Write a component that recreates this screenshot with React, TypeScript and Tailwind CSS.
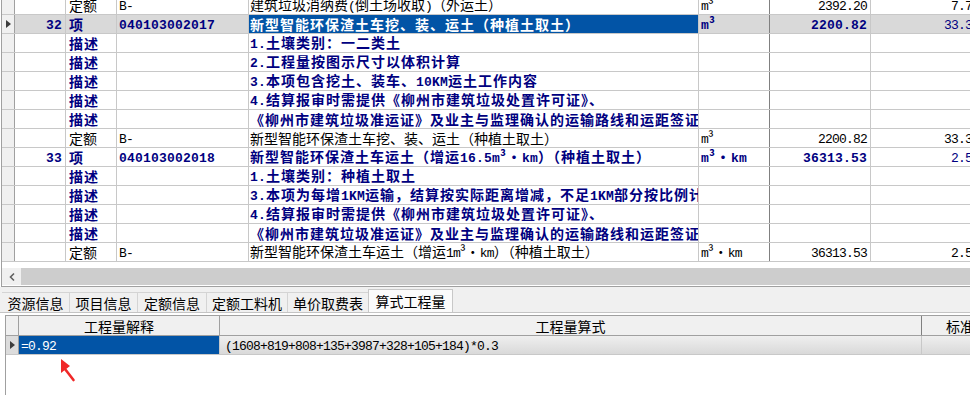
import React from "react";

type Row = {
  num?: string;
  type: string;
  code?: string;
  desc: string;
  unit?: string;
  qty?: string;
  last?: string;
  kind: "quota" | "item" | "desc";
  selected?: boolean;
};

const rows: Row[] = [
  { type: "定额", code: "B-", desc: "建筑垃圾消纳费(倒土场收取)（外运土）", unit: "m³", qty: "2392.20", last: "7.78", kind: "quota" },
  { num: "32", type: "项", code: "040103002017", desc: "新型智能环保渣土车挖、装、运土（种植土取土）", unit: "m³", qty: "2200.82", last: "33.36", kind: "item", selected: true },
  { type: "描述", desc: "1.土壤类别：一二类土", kind: "desc" },
  { type: "描述", desc: "2.工程量按图示尺寸以体积计算", kind: "desc" },
  { type: "描述", desc: "3.本项包含挖土、装车、10KM运土工作内容", kind: "desc" },
  { type: "描述", desc: "4.结算报审时需提供《柳州市建筑垃圾处置许可证》、", kind: "desc" },
  { type: "描述", desc: "《柳州市建筑垃圾准运证》及业主与监理确认的运输路线和运距签证", kind: "desc" },
  { type: "定额", code: "B-", desc: "新型智能环保渣土车挖、装、运土（种植土取土）", unit: "m³", qty: "2200.82", last: "33.36", kind: "quota" },
  { num: "33", type: "项", code: "040103002018", desc: "新型智能环保渣土车运土（增运16.5m³·km）（种植土取土）", unit: "m³·km", qty: "36313.53", last: "2.56", kind: "item" },
  { type: "描述", desc: "1.土壤类别：种植土取土", kind: "desc" },
  { type: "描述", desc: "3.本项为每增1KM运输，结算按实际距离增减，不足1KM部分按比例计算", kind: "desc" },
  { type: "描述", desc: "4.结算报审时需提供《柳州市建筑垃圾处置许可证》、", kind: "desc" },
  { type: "描述", desc: "《柳州市建筑垃圾准运证》及业主与监理确认的运输路线和运距签证", kind: "desc" },
  { type: "定额", code: "B-", desc: "新型智能环保渣土车运土（增运1m³·km）（种植土取土）", unit: "m³·km", qty: "36313.53", last: "2.56", kind: "quota" },
];

function T({ text, bold }: { text: string; bold?: boolean }) {
  const parts = text.match(/[\x20-\x7E]+|[^\x20-\x7E]+/g) || [];
  return (
    <span className={bold ? "whitespace-nowrap font-bold" : "whitespace-nowrap font-normal"}>
      {parts.map((p, i) =>
        /^[\x20-\x7E]/.test(p) ? (
          <span
            key={i}
            className={
              bold
                ? "font-['Liberation_Mono',monospace] text-[13px] tracking-[0.2px]"
                : "font-['Liberation_Mono',monospace] text-[13px] tracking-[-0.8px]"
            }
          >
            {p}
          </span>
        ) : (
          <span key={i} className={bold ? "tracking-[1px]" : ""}>
            {p}
          </span>
        )
      )}
    </span>
  );
}

function Tri() {
  return (
    <svg width="5" height="8" viewBox="0 0 5 8">
      <polygon points="0,0 5,4 0,8" fill="#3c3c3c" />
    </svg>
  );
}

function GridRow({ r }: { r: Row }) {
  const navy = r.kind !== "quota";
  const bold = r.kind !== "quota";
  const base = navy ? "text-[#000080]" : "text-black";
  const rowBg = r.selected ? "bg-[#d9d9d9]" : "bg-white";
  return (
    <div className={`flex h-[19px] border-b border-[#c8c8c8] leading-[18px] ${rowBg}`}>
      <div className="w-[13px] shrink-0 border-r border-[#a0a0a0] bg-[#f0f0f0] flex items-center justify-center">
        {r.selected && <Tri />}
      </div>
      <div className={`w-[51px] shrink-0 border-r border-[#c8c8c8] flex items-center justify-end pr-[3px] overflow-hidden ${base}`}>
        {r.num && <T text={r.num} bold />}
      </div>
      <div className={`w-[51px] shrink-0 border-r border-[#c8c8c8] flex items-center pl-[3px] overflow-hidden ${base}`}>
        <T text={r.type} bold={bold} />
      </div>
      <div className={`w-[132px] shrink-0 border-r border-[#c8c8c8] flex items-center pl-[2px] overflow-hidden ${base}`}>
        {r.code && <T text={r.code} bold={bold} />}
      </div>
      <div
        className={`w-[450px] shrink-0 border-r border-[#c8c8c8] flex items-center pl-[1px] overflow-hidden ${
          r.selected ? "bg-[#0254a6] text-white" : base
        }`}
      >
        <T text={r.desc} bold={bold} />
      </div>
      <div className={`w-[71px] shrink-0 border-r border-[#808080] flex items-center pl-[2px] overflow-hidden ${base}`}>
        {r.unit && <T text={r.unit} bold={bold} />}
      </div>
      <div className={`w-[101px] shrink-0 border-r border-[#c8c8c8] flex items-center justify-end pr-[3px] overflow-hidden ${base}`}>
        {r.qty && <T text={r.qty} bold={bold} />}
      </div>
      <div className={`w-[112px] shrink-0 border-r border-[#c8c8c8] flex items-center justify-end pr-[3px] overflow-hidden ${base}`}>
        {r.last && <T text={r.last} />}
      </div>
    </div>
  );
}

const tabs = [
  { label: "资源信息", w: "w-[68px]" },
  { label: "项目信息", w: "w-[68px]" },
  { label: "定额信息", w: "w-[69px]" },
  { label: "定额工料机", w: "w-[81px]" },
  { label: "单价取费表", w: "w-[81px]" },
];

export default function App() {
  return (
    <div className="relative w-[970px] h-[395px] overflow-hidden bg-white text-[14px] text-black font-['Noto_Sans_CJK_SC',sans-serif]">
      {/* top grid + scrollbar */}
      <div className="ml-px h-[287px] border-l border-b border-[#a0a0a0] flex flex-col">
        <div className="h-[262px] overflow-hidden shrink-0">
          <div className="-mt-[4px] w-[981px]">
            {rows.map((r, i) => (
              <GridRow key={i} r={r} />
            ))}
          </div>
        </div>
        <div className="h-[6px] shrink-0" />
        <div className="h-[17px] shrink-0 flex">
          <div className="w-[19px] shrink-0 bg-[#f0f0f0] flex items-center justify-center">
            <svg width="8" height="10" viewBox="0 0 8 10">
              <path d="M6 1.5 L2.5 5 L6 8.5" fill="none" stroke="#606060" strokeWidth="1.6" />
            </svg>
          </div>
          <div className="flex-1 bg-[#cdcdcd]" />
        </div>
      </div>

      {/* tabs */}
      <div className="h-[26px] bg-[#f0f0f0] border-b border-[#c4c4c4] flex items-end pl-[2px]">
        {tabs.map((t) => (
          <div
            key={t.label}
            className={`${t.w} h-[20px] shrink-0 border-t border-r border-[#d4d4d4] flex items-center justify-center leading-[18px]`}
          >
            {t.label}
          </div>
        ))}
        <div className="w-[85px] h-[23px] shrink-0 -ml-px bg-[#fbfbfb] border-t border-l border-r border-[#c8c8c8] flex items-center justify-center leading-[18px]">
          算式工程量
        </div>
      </div>

      {/* bottom panel */}
      <div className="pl-[5px] pt-[2px] h-[82px]">
        <div className="h-full border-l border-t border-[#a0a0a0] overflow-hidden">
          <div className="flex h-[20px] border-b border-[#a0a0a0] bg-[#f0f0f0] leading-[18px] w-[1021px]">
            <div className="w-[13px] shrink-0 border-r border-[#a0a0a0]" />
            <div className="w-[201px] shrink-0 border-r border-[#a0a0a0] flex items-center justify-center">工程量解释</div>
            <div className="w-[702px] shrink-0 border-r border-[#808080] flex items-center justify-center">工程量算式</div>
            <div className="w-[104px] shrink-0 flex items-center justify-center">标准换算</div>
          </div>
          <div className="flex h-[19px] border-b border-[#c8c8c8] leading-[18px] w-[1021px]">
            <div className="w-[13px] shrink-0 border-r border-[#a0a0a0] bg-[#dcdcdc] flex items-center justify-center">
              <Tri />
            </div>
            <div className="w-[201px] shrink-0 border-r border-[#c8c8c8] bg-[#0254a6] text-white flex items-center pl-[2px]">
              <T text="=0.92" />
            </div>
            <div className="w-[702px] shrink-0 border-r border-[#c8c8c8] bg-linear-to-b from-[#efefef] to-[#d9d9d9] flex items-center pl-[5px]">
              <T text="(1608+819+808+135+3987+328+105+184)*0.3" />
            </div>
            <div className="w-[104px] shrink-0 bg-linear-to-b from-[#efefef] to-[#d9d9d9]" />
          </div>
        </div>
      </div>

      {/* red annotation arrow */}
      <svg className="absolute left-[56px] top-[355px]" width="24" height="30" viewBox="0 0 24 30">
        <polygon points="5,4 5,18 14,11" fill="#f02828" />
        <line x1="9" y1="14" x2="17.5" y2="25" stroke="#f02828" strokeWidth="2.6" strokeLinecap="round" />
      </svg>
    </div>
  );
}
